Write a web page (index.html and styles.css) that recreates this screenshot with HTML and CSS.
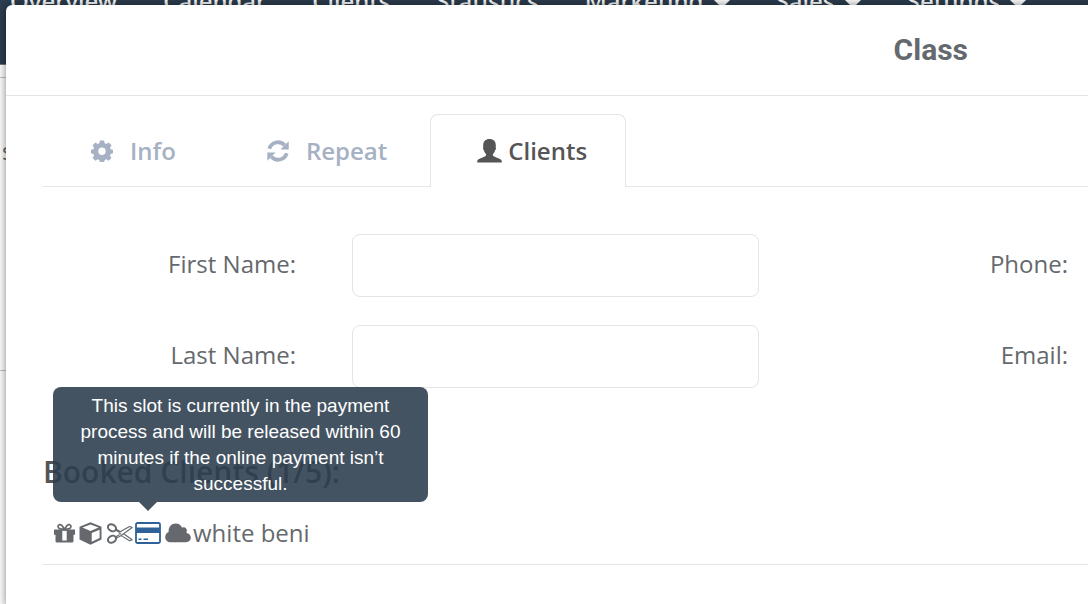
FILE: index.html
```html
<!DOCTYPE html>
<html lang="en">
<head>
<meta charset="utf-8">
<title>Class</title>
<link rel="stylesheet" href="styles.css">
</head>
<body>
<div class="page">
  <nav class="nav">
    <a class="nav-link" href="#">Overview</a>
    <a class="nav-link" href="#">Calendar</a>
    <a class="nav-link" href="#">Clients</a>
    <a class="nav-link" href="#">Statistics</a>
    <a class="nav-link" href="#">Marketing <span class="caret"></span></a>
    <a class="nav-link" href="#">Sales <span class="caret"></span></a>
    <a class="nav-link" href="#">Settings <span class="caret"></span></a>
  </nav>
  <div class="toolbar"></div>
  <div class="side"><span>s</span></div>
</div>

<section class="dialog" role="dialog" aria-labelledby="dialog-title">
  <header class="dialog-header"><h1 class="dialog-title" id="dialog-title">Class</h1></header>
  <div class="dialog-body">
    <div class="tabs" role="tablist">
      <button class="tab" role="tab" type="button">
        <svg class="tab-icon" viewBox="0 0 22 22" aria-hidden="true"><path fill="currentColor" fill-rule="evenodd" d="M8.900.5h4.200l.6 2.800 1.600.7 2.400-1.600 2.900 2.900L19 7.700l.7 1.500 2.300.5v3.600l-2.300.6-.8 1.700 1.600 2.300-2.900 2.900-2.300-1.600-1.600.7-.6 2.600H8.900l-.6-2.600-1.600-.7-2.300 1.600-2.900-2.900 1.600-2.300-.8-1.700L0 13.300V9.700l2.300-.5.8-1.500L1.500 5.300l2.900-2.900L6.700 4l1.600-.7zM11 7.500a3.700 3.700 0 1 0 0 7.400 3.700 3.700 0 0 0 0-7.400z"/></svg>
        <span>Info</span>
      </button>
      <button class="tab" role="tab" type="button">
        <svg class="tab-icon" viewBox="0 0 22 22" aria-hidden="true"><g fill="none" stroke="currentColor" stroke-width="3.800"><path d="M2.300 8.800A9 9 0 0 1 17.600 5.200"/><path d="M19.700 13.200A9 9 0 0 1 4.400 16.800"/></g><path fill="currentColor" d="M21.700 1.200v8.300h-8.300zM.3 20.800v-8.300h8.300z"/></svg>
        <span>Repeat</span>
      </button>
      <button class="tab tab-active" role="tab" type="button" aria-selected="true">
        <svg class="user-icon" viewBox="0 0 25 25" aria-hidden="true"><path fill="currentColor" d="M12.500 0c4 0 6.300 2.400 6.300 6.300 0 .8 0 1.400-.1 2 .6.700.3 2.200-.6 2.900-.4 1.700-1.200 3-2.200 3.900v1.200c.5 1 1.700 1.500 4.100 2.500 3 1.200 4.500 2 4.700 3.200l.1 1.500H.2l.1-1.500c.2-1.200 1.700-2 4.700-3.200 2.400-1 3.600-1.500 4.100-2.500v-1.200c-1-.9-1.800-2.200-2.200-3.900-.9-.7-1.200-2.200-.6-2.900-.1-.6-.1-1.200-.1-2C6.200 2.400 8.500 0 12.500 0z"/></svg>
        <span>Clients</span>
      </button>
    </div>

    <form class="form">
      <label class="label" for="first">First Name:</label>
      <input class="field" id="first" type="text">
      <label class="label" for="phone">Phone:</label>
      <input class="field" id="phone" type="tel">
      <label class="label" for="last">Last Name:</label>
      <input class="field" id="last" type="text">
      <label class="label" for="email">Email:</label>
      <input class="field" id="email" type="email">
    </form>

    <h2 class="subtitle">Booked Clients (1/5):</h2>
    <div class="client">
      <svg class="icon icon-gift" viewBox="0 0 21 21" aria-hidden="true"><path fill="currentColor" fill-rule="evenodd" d="M0 6.500h21v5.300h-1.500V18a1.500 1.500 0 0 1-1.500 1.500H3A1.500 1.500 0 0 1 1.500 18v-6.200H0zM8.300 7.800v9.700h4.400V7.800z"/><path fill="none" stroke="currentColor" stroke-width="1.700" d="M10.500 6.500C8.500 2.500 7.300 1.300 5.600 1.600 3.500 2 3.500 5 5.600 5.600c1 .3 3 .5 4.900.9zM10.500 6.500c2-4 3.200-5.200 4.900-4.900 2.100.4 2.100 3.400 0 4-1 .3-3 .5-4.900.9z"/></svg>
      <svg class="icon icon-cube" viewBox="0 0 23 23" aria-hidden="true"><path fill="currentColor" fill-rule="evenodd" d="M11.500.3l11 4.500v12.700l-11 5.300-11-5.300V4.800zM11.500 2.400L3.400 5.600l8.100 3.300 8.100-3.300zM12.700 10.900v8.900l7.900-3.800V7.700z"/></svg>
      <svg class="icon icon-cut" viewBox="0 0 26 21" aria-hidden="true"><g fill="none" stroke="currentColor"><ellipse cx="5" cy="4.800" rx="4.200" ry="3.300" stroke-width="2" transform="rotate(28 5 4.800)"/><ellipse cx="5" cy="16.200" rx="4.200" ry="3.300" stroke-width="2" transform="rotate(-28 5 16.200)"/><path stroke-width="1.100" stroke-linejoin="round" d="M8.500 7l3.800 2.300L22.500 3.500l2.700 1L13.500 13l-5 2.400M8.500 14l3.800-2.300M8.500 5.800l4.500 2.700M14.200 12.600l8.300 5.200 2.700-1-8.600-6.100"/><circle cx="13" cy="10.700" r=".7" stroke-width="1"/></g></svg>
      <span class="slot">
        <svg class="icon icon-card" viewBox="0 0 26 22" aria-hidden="true"><rect x="1" y="1" width="24" height="20" rx="1.500" fill="none" stroke="currentColor" stroke-width="1.800"/><path fill="currentColor" d="M1 5.500h24v5.500H1zM3.500 16.500h3v1.500h-3zM8.500 16.500H13V18H8.500z"/></svg>
        <span class="tooltip" role="tooltip">This slot is currently in the payment process and will be released within 60 minutes if the online payment isn’t successful.</span>
      </span>
      <svg class="icon icon-cloud" viewBox="0 0 26 20" aria-hidden="true"><path fill="currentColor" d="M5.800 19.300C2.500 19.300.2 17 .2 14c0-2.400 1.400-4.300 3.400-5.100C3.300 4 6.500.5 10.700.5c3 0 5.300 1.600 6.400 4.200 2.600-1.200 5.300.7 4.700 3.800-.1.600-.2 1-.4 1.400 2.600.4 4.400 2.200 4.400 4.700 0 2.600-2 4.700-4.800 4.700z"/></svg>
      <span>white beni</span>
    </div>
  </div>
</section>
</body>
</html>
```
FILE: styles.css
```css
* { box-sizing: border-box; }

body {
  margin: 0;
  min-height: 100vh;
  overflow: hidden;
  background: #fff;
  color: #65696d;
  font: 24px/32px "Open Sans", sans-serif;
}

.page { min-height: 100vh; }

.nav {
  display: flex;
  gap: 46px;
  height: 65px;
  padding-left: 10px;
  overflow: hidden;
  background: #2d3e4f;
  border-bottom: 1px solid #777;
  font-family: "Noto Sans", sans-serif;
  font-weight: 500;
  line-height: 2px;
}

.nav-link {
  color: #fff;
  text-decoration: none;
  white-space: nowrap;
}

.caret {
  display: inline-block;
  margin-left: 4px;
  border: 8px solid transparent;
  border-top-color: #fff;
  border-bottom: 0;
  vertical-align: 2px;
}

.toolbar { height: 13px; border-bottom: 1px solid #c4c4c4; }

.side {
  height: 293px;
  padding: 57px 0 0 2px;
  border-bottom: 1px solid #c4c4c4;
}

.dialog {
  position: absolute;
  top: 5px;
  left: 6px;
  width: 170vw;
  min-height: 100vh;
  background: #fff;
  border-radius: 6px;
  box-shadow: 0 0 10px rgba(0, 0, 0, .5);
}

.dialog-header {
  padding: 29px 0;
  border-bottom: 1px solid #e3e4e5;
  text-align: center;
}

.dialog-title {
  margin: 0;
  color: #65696d;
  font: bold 30px/32px Roboto, sans-serif;
}

.dialog-body { padding: 18px 37px; }

.tabs {
  display: flex;
  border-bottom: 1px solid #e6e6e6;
}

.tab {
  display: flex;
  align-items: center;
  gap: 17px;
  height: 73px;
  margin-bottom: -1px;
  padding: 0 42px 0 47px;
  border: 1px solid transparent;
  border-bottom: 0;
  border-radius: 8px 8px 0 0;
  background: none;
  color: #a6b1c3;
  font: 600 24px/32px "Open Sans", sans-serif;
}

.tab + .tab-active {
  gap: 6px;
  padding: 0 38px 0 46px;
  background: #fff;
  border-color: #e6e6e6;
  color: #555;
}

.tab-icon { width: 22px; height: 22px; }
.user-icon { width: 25px; height: 25px; }

.form {
  display: grid;
  grid-template-columns: 253px 407px 253px 407px;
  gap: 28px 56px;
  align-items: center;
  padding-top: 47px;
}

.label { padding-bottom: 4px; text-align: right; }

.field {
  width: 100%;
  height: 63px;
  padding: 0 16px;
  border: 1px solid #e3e4e5;
  border-radius: 8px;
  background: #fff;
  font: inherit;
}

.subtitle {
  margin: 66px 0 0;
  color: #555;
  font: 600 30px/36px "Open Sans", sans-serif;
}

.client {
  display: flex;
  align-items: center;
  height: 75px;
  padding: 12px 0 0 11px;
  border-bottom: 1px solid #e6e6e6;
  white-space: nowrap;
}

.icon { display: block; flex: none; }
.icon-gift { width: 21px; height: 21px; margin-right: 4px; }
.icon-cube { width: 23px; height: 23px; margin-right: 5px; }
.icon-cut { width: 26px; height: 21px; margin-right: 2px; }
.icon-card { width: 26px; height: 22px; }
.icon-cloud { width: 26px; height: 20px; margin: 0 2px 0 4px; }

.slot { position: relative; color: #2f6199; }

.tooltip {
  position: absolute;
  bottom: 42px;
  left: -82px;
  width: 375px;
  padding: 6px 24px 5px;
  border-radius: 8px;
  background: rgba(45, 62, 79, .89);
  color: #fff;
  font: 19px/26px "Liberation Sans", Arial, sans-serif;
  text-align: center;
  white-space: normal;
}

.tooltip::after {
  content: "";
  position: absolute;
  top: 100%;
  left: 86px;
  border: 9px solid transparent;
  border-top-color: rgba(45, 62, 79, .89);
  border-bottom: 0;
}
```
